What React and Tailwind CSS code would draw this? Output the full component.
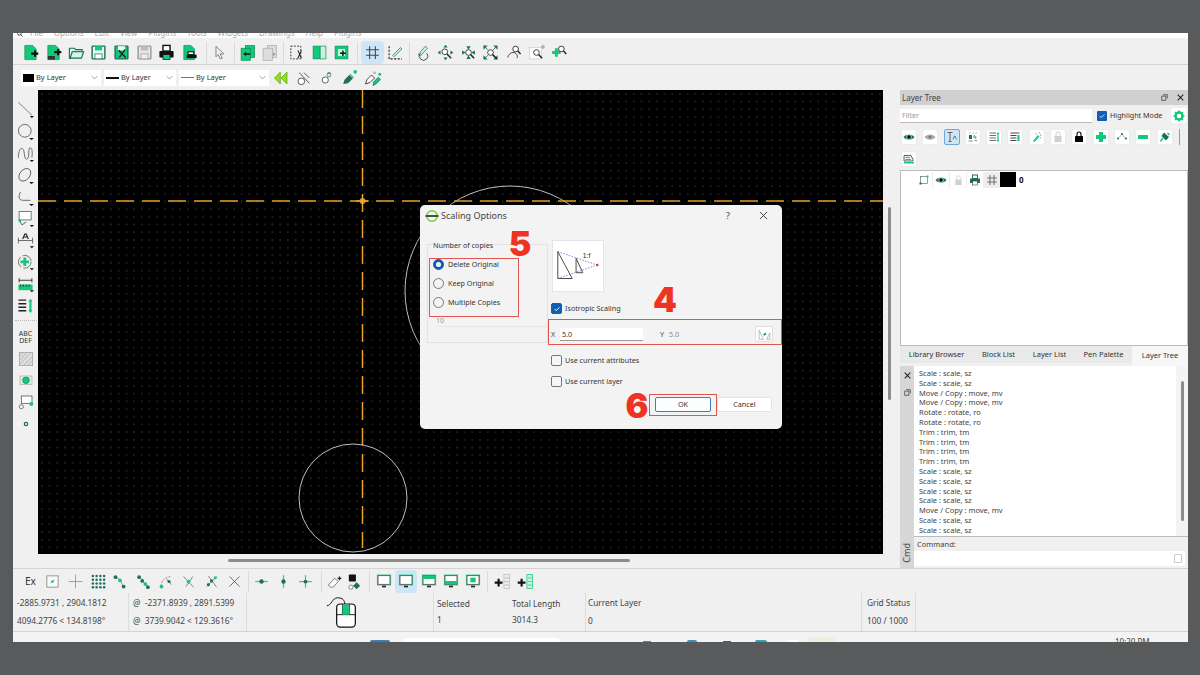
const G = '#12c97b';
const D = '#1f6f5c';

// toolbar glyphs, all on a 24 box
const glyphs = {
  newDoc: <><path d="M4 2h11l5 5v15H4z" fill={G} stroke="#0a8f57" /><path d="M13 12h4v-3h3v3h3v3h-3v3h-3v-3h-4z" fill="#111" /></>,
  newTpl: <><path d="M4 2h11l5 5v15H4z" fill={G} stroke="#0a8f57" /><path d="M4 17h10v5H4z" fill="#333" /><path d="M13 10h4V7h3v3h3v3h-3v3h-3v-3h-4z" fill="#111" /></>,
  open: <><path d="M2 6h7l2 2h9v3H7l-3 9H2z" fill="#d8f5e6" stroke={D} strokeWidth="1.6" /><path d="M6 11h16l-3 9H3z" fill="#d8f5e6" stroke={D} strokeWidth="1.6" /></>,
  save: <><rect x="3" y="3" width="18" height="18" rx="1" fill="#e8f7ef" stroke={D} strokeWidth="2" /><rect x="7" y="3" width="10" height="6" fill={G} /><rect x="7" y="14" width="10" height="7" fill="#fff" stroke={D} /></>,
  saveAs: <><rect x="3" y="3" width="18" height="18" rx="1" fill={G} stroke={D} strokeWidth="2" /><rect x="7" y="3" width="10" height="6" fill="#e8f7ef" /><path d="M8 9l10 10M17 8l-8 11" stroke="#222" strokeWidth="2" /></>,
  saveOff: <><rect x="3" y="3" width="18" height="18" rx="1" fill="#e4e4e4" stroke="#9a9a9a" strokeWidth="2" /><rect x="7" y="3" width="10" height="6" fill="#bbb" /><rect x="7" y="14" width="10" height="7" fill="#eee" stroke="#9a9a9a" /></>,
  print: <><rect x="7" y="2" width="10" height="8" fill="#fff" stroke="#111" strokeWidth="2" /><rect x="2" y="10" width="20" height="9" rx="1" fill="#111" /><rect x="7" y="15" width="10" height="7" fill={G} stroke="#111" /></>,
  printPrev: <><path d="M4 2h10l5 5v15H4z" fill={G} stroke="#0a8f57" /><rect x="10" y="11" width="8" height="4" fill="#fff" stroke="#111" strokeWidth="1.5" /><rect x="8" y="15" width="14" height="5" fill="#111" /></>,
  cursor: <path d="M7 3l11 11h-5l3 6-3 1-3-6-3 3z" fill="#eee" stroke="#777" strokeWidth="1.2" />,
  copy: <><rect x="9" y="2" width="13" height="17" fill={G} stroke="#0a8f57" /><rect x="3" y="6" width="13" height="17" fill={G} stroke="#0a8f57" /><path d="M6 14l4-3v2h6v2h-6v2z" fill="#111" /></>,
  copyOff: <><rect x="9" y="2" width="13" height="17" fill="#ddd" stroke="#aaa" /><rect x="3" y="6" width="13" height="17" fill="#ddd" stroke="#aaa" /><path d="M17 12l4 2-4 3z" fill="#999" /></>,
  cutDash: <><rect x="4" y="3" width="14" height="18" fill="none" stroke="#333" strokeWidth="1.4" strokeDasharray="2.5 2" /><path d="M14 9l5 11M19 9l-5 11" stroke="#222" strokeWidth="1.5" /></>,
  pages: <><rect x="3" y="3" width="10" height="18" fill={G} stroke="#0a8f57" /><path d="M13 3h8v18h-8z" fill="#c9f3de" stroke="#0a8f57" /></>,
  pagePlus: <><rect x="3" y="3" width="18" height="18" fill={G} stroke="#0a8f57" /><rect x="7" y="7" width="10" height="10" fill="#c9f3de" /><path d="M10 12h3V9h2v3h3v2h-3v3h-2v-3h-3z" fill="#111" /></>,
  grid: <path d="M8 3v18M16 3v18M3 8h18M3 16h18" stroke="#444" strokeWidth="1.5" />,
  dashLine: <><path d="M3 3v18h18" fill="none" stroke="#222" strokeWidth="1.6" strokeDasharray="3 2" /><path d="M8 16L19 5l2 2L10 18z" fill="#c9f3de" stroke={D} /></>,
  redraw: <><path d="M6 15L16 3l3 3L9 17z" fill="#c9f3de" stroke={D} /><path d="M9 13a6 6 0 1 0 9 0" fill="none" stroke="#333" strokeWidth="1.2" /></>,
  zoomIn: <><path d="M12 1l3 4H9zM12 23l-3-4h6zM1 12l4-3v6zM23 12l-4 3V9z" fill={D} /><circle cx="11" cy="11" r="4" fill="#fff" stroke="#333" strokeWidth="1.3" /><path d="M14 14l6 6" stroke="#222" strokeWidth="2" /></>,
  zoomOut: <><path d="M12 8L9 3h6zM12 16l3 5H9zM8 12l-5 3V9zM16 12l5-3v6z" fill={D} /><circle cx="12" cy="12" r="4" fill="#fff" stroke="#333" strokeWidth="1.3" /><path d="M15 15l5 5" stroke="#222" strokeWidth="2" /></>,
  zoomFit: <><path d="M2 2h6L2 8zM22 2v6l-6-6zM2 22v-6l6 6zM22 22h-6l6-6z" fill={D} /><path d="M4 4l4 4M20 4l-4 4M4 20l4-4" stroke={D} strokeWidth="1.3" /><circle cx="12" cy="12" r="4" fill="#fff" stroke="#333" strokeWidth="1.3" /><path d="M15 15l6 6" stroke="#222" strokeWidth="2" /></>,
  zoomPrev: <><circle cx="15" cy="7" r="4" fill="#fff" stroke="#333" strokeWidth="1.3" /><path d="M18 10l4 4" stroke="#222" strokeWidth="2" /><path d="M4 19a8 8 0 0 1 9-7 6 6 0 0 1 4 8" fill="none" stroke="#333" strokeWidth="1.2" /></>,
  zoomWin: <><rect x="2" y="5" width="17" height="16" fill="#fff" stroke="#ccc" /><circle cx="12" cy="12" r="4" fill="#fff" stroke="#333" strokeWidth="1.3" /><path d="M15 15l5 5" stroke="#222" strokeWidth="2" /><path d="M21 1v6M18 4h6" stroke="#777" /></>,
  zoomPan: <><path d="M7 6h4v4h4v4h-4v4H7v-4H3v-4h4z" fill={G} /><circle cx="16" cy="7" r="4" fill="#fff" stroke="#333" strokeWidth="1.3" /><path d="M19 10l4 4" stroke="#222" strokeWidth="2" /></>,
  backAll: <><path d="M11 3v18L2 12z" fill="#8fe01a" stroke="#5aa50c" /><path d="M21 3v18l-9-9z" fill="#8fe01a" stroke="#5aa50c" /></>,
  sel1: <><circle cx="8" cy="17" r="5" fill="#fff" stroke="#444" strokeWidth="1.3" /><path d="M5 4l15 16M12 4l8 8" stroke="#444" strokeWidth="1.3" /></>,
  sel2: <><circle cx="10" cy="16" r="5" fill="#fff" stroke="#444" strokeWidth="1.3" /><circle cx="16" cy="8" r="3" fill="#d8f5e6" stroke={D} /><path d="M16 3v2M13 5h6" stroke="#444" /></>,
  pen: <><path d="M3 21l2-6 8-8 5 5-8 8z" fill={D} /><path d="M12 8l5 5" stroke="#fff" /><circle cx="20" cy="4" r="2.6" fill={G} /></>,
  penPair: <><path d="M2 20l2-6 6-6 4 4-6 6z" fill="#fff" stroke="#444" strokeWidth="1.3" /><path d="M12 22l1-5 6-6 3 3-6 6z" fill={G} stroke={D} /><circle cx="14" cy="5" r="2" fill="#bbb" /><circle cx="21" cy="7" r="2" fill={G} /></>,
  line: <><path d="M2 2l19 18" stroke="#555" strokeWidth="1" /><path d="M18 21h6l-3 3z" fill="#111" /></>,
  circle: <><circle cx="11" cy="11" r="9" fill="none" stroke="#555" strokeWidth="1.2" /><path d="M17 21h7l-3.5 3z" fill="#111" /></>,
  spline: <><path d="M2 18C2 2 9 2 10 10s2 12 5 9 0-16 4-15 2 14 2 14" fill="none" stroke="#555" strokeWidth="1.2" /><path d="M18 21h6l-3 3z" fill="#111" /></>,
  ellipse: <><ellipse cx="11" cy="11" rx="7" ry="10" transform="rotate(40 11 11)" fill="none" stroke="#555" strokeWidth="1.2" /><path d="M17 21h7l-3.5 3z" fill="#111" /></>,
  curve: <><path d="M5 4C1 12 3 16 9 16h10" fill="none" stroke="#555" strokeWidth="1.2" /><path d="M17 21h7l-3.5 3z" fill="#111" /></>,
  polyline: <><rect x="3" y="2" width="17" height="12" fill="#fff" stroke="#666" strokeWidth="1.2" /><path d="M3 14l4 7 6-4" fill="none" stroke={D} strokeWidth="1.3" /><circle cx="4" cy="15" r="2" fill={G} /><path d="M18 21h6l-3 3z" fill="#111" /></>,
  dim: <><path d="M2 8v8M22 8v8M2 12h20" stroke="#555" strokeWidth="1.2" /><path d="M8 10l3-7h2l3 7M9 7h6" fill="none" stroke="#222" strokeWidth="1.6" /><path d="M18 20h6l-3 3z" fill="#111" /></>,
  modify: <><circle cx="11" cy="11" r="9" fill="none" stroke="#555" strokeWidth="1.1" strokeDasharray="16 3" /><path d="M9 5h4v4h4v4h-4v4H9v-4H5V9h4z" fill={G} /><path d="M18 20h6l-3 3z" fill="#111" /></>,
  measure: <><path d="M3 3v6M21 3v6M3 6h18" stroke="#333" strokeWidth="1.3" /><rect x="2" y="12" width="20" height="8" fill={G} /><path d="M5 12v3M9 12v3M13 12v3M17 12v3" stroke="#111" /><path d="M18 20h6l-3 3z" fill="#111" /></>,
  order: <><path d="M2 3h11M2 8h11M2 13h11M2 18h11" stroke="#222" strokeWidth="2" /><path d="M19 3v16" stroke={G} strokeWidth="3" /><path d="M19 1l3 4h-6zM19 21l3-4h-6z" fill={G} /></>,
  hatch: <><rect x="2" y="2" width="20" height="20" fill="#ddd" stroke="#999" /><path d="M2 8l6-6M2 14L14 2M2 20L20 2M8 22L22 8M14 22l8-8" stroke="#aaa" /></>,
  camera: <><rect x="3" y="6" width="18" height="13" fill="#e7e7e7" stroke="#aaa" /><circle cx="12" cy="12.5" r="5" fill={G} stroke="#0a8f57" /></>,
  block: <><rect x="5" y="3" width="16" height="11" fill="#fff" stroke="#555" strokeWidth="1.2" /><circle cx="5" cy="19" r="3" fill="#fff" stroke="#555" strokeWidth="1.2" /><circle cx="20" cy="15" r="3" fill={G} /></>,
  point: <circle cx="12" cy="12" r="2.5" fill="#fff" stroke={D} strokeWidth="2" />,
  snapEx: <><rect x="3" y="3" width="18" height="18" fill="#fafafa" stroke="#777" strokeWidth="1.2" /><circle cx="12" cy="12" r="2" fill={G} /><path d="M9 15l6-6" stroke="#777" /></>,
  cross: <path d="M12 1v22M1 12h22" stroke="#777" strokeWidth="1" />,
  dots: <g fill={D}>{[3, 9, 15, 21].flatMap((x) => [3, 9, 15, 21].map((y) => <circle key={`${x}-${y}`} cx={x} cy={y} r="2" />))}</g>,
  snapA: <><path d="M4 4l8 6 4 10" fill="none" stroke="#666" strokeWidth="1.1" /><circle cx="4" cy="5" r="3" fill={D} /><circle cx="11" cy="10" r="3" fill={G} /><circle cx="17" cy="20" r="3" fill={D} /></>,
  snapB: <><path d="M4 3l16 19" stroke="#666" strokeWidth="1.1" /><circle cx="5" cy="5" r="3" fill={D} /><circle cx="10" cy="11" r="3" fill={D} /><circle cx="15" cy="16" r="3" fill={G} /><circle cx="19" cy="21" r="3" fill={D} /></>,
  snapC: <><path d="M3 19C4 10 10 5 20 4" fill="none" stroke="#666" strokeWidth="1.1" strokeDasharray="3 2" /><circle cx="4" cy="20" r="3" fill={G} /><path d="M12 8l8 9" stroke="#444" /><circle cx="16" cy="12" r="2.5" fill={D} /></>,
  snapD: <><path d="M4 4l16 17M19 4L8 20" stroke="#555" strokeWidth="1.1" /><circle cx="12" cy="12" r="3" fill={G} /></>,
  snapE: <><path d="M4 20L21 4M7 3l13 18" stroke="#555" strokeWidth="1.1" /><circle cx="12" cy="11" r="2.5" fill={D} /><circle cx="18" cy="6" r="2.5" fill={G} /><circle cx="7" cy="17" r="2.5" fill={D} /></>,
  snapX: <path d="M4 4l16 16M20 4L4 20" stroke="#444" strokeWidth="1.2" />,
  horiz: <><path d="M2 12h20" stroke="#4bbd8e" strokeWidth="2" /><circle cx="12" cy="12" r="3.5" fill={D} /></>,
  vert: <><path d="M12 2v20" stroke="#4bbd8e" strokeWidth="2" /><circle cx="12" cy="12" r="3.5" fill={D} /></>,
  both: <><path d="M2 12h20M12 2v20" stroke="#4bbd8e" strokeWidth="2" /><circle cx="12" cy="12" r="3" fill={D} /></>,
  eraser: <><path d="M2 18l10-11 6 5-8 9H6z" fill="#fff" stroke="#555" strokeWidth="1.2" /><path d="M17 7h6M20 4v6" stroke="#222" strokeWidth="2" /></>,
  lockSnap: <><rect x="4" y="2" width="10" height="10" rx="1" fill="#111" /><path d="M15 13l5 5-5 5-5-5z" fill={D} /><circle cx="7" cy="20" r="3" fill="#fff" stroke="#555" /></>,
  plusList: <><path d="M1 12h4V8h3v4h4v3H8v4H5v-4H1z" fill="#111" /><rect x="14" y="2" width="8" height="20" fill="#eee" stroke="#bbb" /><path d="M15 7h6M15 12h6M15 17h6" stroke="#aaa" /></>,
  plusCheck: <><path d="M1 12h4V8h3v4h4v3H8v4H5v-4H1z" fill="#111" /><rect x="14" y="2" width="8" height="20" fill="#c9f3de" stroke={G} /><path d="M15 7h6M15 12h6M15 17h6" stroke={G} /></>,
  eye: <><path d="M1 12c5-7 17-7 22 0-5 7-17 7-22 0z" fill={D} /><circle cx="12" cy="12" r="3" fill="#0a0a0a" /><circle cx="12" cy="12" r="5" fill="none" stroke="#fff" strokeWidth="1" /></>,
  eyeOff: <><path d="M1 12c5-7 17-7 22 0-5 7-17 7-22 0z" fill="#aaa" /><circle cx="12" cy="12" r="3" fill="#777" /></>,
  textAuto: <><path d="M3 3h10M8 3v18M5 21h6" stroke="#444" strokeWidth="1.6" /><path d="M14 17l3-7h1l3 7" fill="none" stroke={D} strokeWidth="1.5" /></>,
  tools1: <><path d="M4 4h3M11 4h3M17 4h3" stroke="#777" /><rect x="4" y="8" width="6" height="8" fill={D} /><path d="M12 12h7M15 19h5M3 20h8" stroke="#555" strokeWidth="1.4" /><path d="M14 8l4 8" stroke={G} strokeWidth="2" /></>,
  tools2: <><path d="M3 4h13M3 9h13M3 14h13M3 19h13" stroke="#555" strokeWidth="1.7" /><path d="M20 4v16" stroke={G} strokeWidth="2.5" /><path d="M20 2l3 4h-6zM20 22l3-4h-6z" fill={G} /></>,
  tools3: <><path d="M3 4h18M3 9h12M3 14h12M3 19h12" stroke="#444" strokeWidth="2" /><rect x="17" y="8" width="4" height="12" fill={G} /></>,
  wand: <><path d="M4 20L14 8l3 3L7 22z" fill={G} /><path d="M16 2l2 3M21 8l-3 1M10 4l1 3M20 14l-2-1" stroke="#777" strokeWidth="1.4" /></>,
  lockOff: <><rect x="5" y="10" width="14" height="12" rx="1" fill="#d0d0d0" /><path d="M8 10V6a4 4 0 0 1 8 0v4" fill="none" stroke="#d0d0d0" strokeWidth="2" /></>,
  lockOn: <><rect x="4" y="10" width="16" height="12" rx="1" fill="#000" /><path d="M8 10V6a4 4 0 0 1 8 0v4" fill="none" stroke="#000" strokeWidth="2.2" /></>,
  plus: <path d="M8 2h8v6h6v8h-6v6H8v-6H2V8h6z" fill={G} />,
  wave: <><path d="M3 16l5-5 4-6 4 7 5 4" fill="none" stroke="#888" strokeWidth="1.2" /><circle cx="4" cy="15" r="2" fill={D} /><circle cx="12" cy="6" r="2" fill={D} /><circle cx="20" cy="15" r="2" fill={D} /></>,
  minus: <rect x="2" y="8" width="20" height="8" rx="1" fill={G} />,
  hammer: <><path d="M10 3l10 9-6 7-9-9z" fill={D} /><path d="M8 14l-5 7M17 4l4 4" stroke={G} strokeWidth="3" /></>,
  iron: <><path d="M2 5h14l4 8v3H2z" fill="#e8f7ef" stroke="#222" strokeWidth="1.4" /><path d="M5 9h9M5 13h11" stroke="#222" /><rect x="2" y="18" width="20" height="3" fill={G} /></>,
  rect: <><rect x="5" y="5" width="14" height="14" fill="none" stroke="#666" strokeWidth="1.3" /><rect x="17" y="3" width="4" height="4" fill={G} /><rect x="3" y="17" width="4" height="4" fill={D} /></>,
  printLayer: <><rect x="7" y="2" width="10" height="7" fill="#fff" stroke={D} strokeWidth="2" /><rect x="2" y="9" width="20" height="9" fill={D} /><rect x="7" y="14" width="10" height="8" fill="#fff" stroke="#111" /></>,
  gridThick: <path d="M8 2v20M16 2v20M2 8h20M2 16h20" stroke="#777" strokeWidth="2.4" />,
  gear: <><circle cx="12" cy="12" r="7" fill="#fff" stroke={G} strokeWidth="5" /><path d="M12 1v4M12 19v4M1 12h4M19 12h4M4 4l3 3M17 17l3 3M20 4l-3 3M7 17l-3 3" stroke={G} strokeWidth="3" /></>,
  mirror: <><path d="M2 21V4l8 17z" fill="#fff" stroke="#888" /><path d="M12 12h4l-2-4z" fill={G} /><path d="M22 21V9l-6 12z" fill="#fff" stroke="#888" /><circle cx="12" cy="12" r="2" fill={D} /></>,
};

function Screen({ top = false, bottom = false, center = false }) {
  return (
    <svg viewBox="0 0 24 24" className="w-[16px] h-[16px]">
      <rect x="2" y="3" width="20" height="15" fill="#fff" stroke={G} strokeWidth="1.2" />
      <rect x="3" y="4" width="18" height="13" fill="#fff" stroke="#444" strokeWidth="1.2" />
      {top && <rect x="3" y="4" width="18" height="5" fill={G} />}
      {bottom && <rect x="3" y="12" width="18" height="5" fill={G} />}
      {center && <rect x="8" y="7" width="8" height="7" fill={G} />}
      <rect x="9" y="19" width="6" height="2.5" fill="#222" />
    </svg>
  );
}

function Icon({ name, size = 17, active = false, box = 22.7 }) {
  return (
    <span
      className={`inline-flex items-center justify-center shrink-0 h-[23px] ${active ? 'bg-[#cde6f7] rounded-sm' : ''}`}
      style={{ width: box }}
    >
      <svg viewBox="0 0 24 24" style={{ width: size, height: size }}>{glyphs[name]}</svg>
    </span>
  );
}

function Sep({ className = '' }) {
  return <span className={`w-px h-[21px] bg-[#dadada] shrink-0 ${className}`} />;
}

function LayerIcon({ name, active = false }) {
  return (
    <span className={`w-[16px] h-[16px] flex items-center justify-center rounded-[2px] shrink-0 ${active ? 'bg-[#cfe4f5] border border-[#6fa8d8]' : 'bg-white border border-[#ececec]'}`}>
      <svg viewBox="0 0 24 24" className="w-[12px] h-[12px]">{glyphs[name]}</svg>
    </span>
  );
}

function SelectBox({ width, swatch, label }) {
  return (
    <div className="h-[16px] bg-white flex items-center pl-[2px] pr-[3px] gap-[2px] shrink-0" style={{ width }}>
      {swatch}
      <span className="text-[7.5px] text-[#333] flex-1 whitespace-nowrap">{label}</span>
      <svg viewBox="0 0 10 6" className="w-[7px] h-[5px]"><path d="M1 1l4 4 4-4" fill="none" stroke="#777" /></svg>
    </div>
  );
}

function Radio({ label, checked = false }) {
  return (
    <div className="h-[19px] flex items-center gap-[4px]">
      <span className={`w-[11px] h-[11px] rounded-full border flex items-center justify-center ${checked ? 'bg-[#0f5fb5] border-[#0f5fb5]' : 'bg-[#f3f3f3] border-[#777]'}`}>
        {checked && <span className="w-[5px] h-[5px] rounded-full bg-white" />}
      </span>
      <span className="text-[7.2px] text-[#333]">{label}</span>
    </div>
  );
}

function Check({ label, checked = false }) {
  return (
    <div className="flex items-center gap-[3px]">
      <span className={`w-[11px] h-[11px] rounded-[2px] border flex items-center justify-center ${checked ? 'bg-[#0f5fb5] border-[#0f5fb5]' : 'bg-[#f6f6f6] border-[#777]'}`}>
        {checked && <svg viewBox="0 0 10 10" className="w-[8px] h-[8px]"><path d="M2 5l2 2 4-4" fill="none" stroke="#fff" strokeWidth="1.2" /></svg>}
      </span>
      <span className="text-[7.2px] text-[#333]">{label}</span>
    </div>
  );
}

function ScalingDialog() {
  return (
    <div className="absolute left-[382px] top-[115px] w-[362px] h-[224px] bg-[#f3f3f3] rounded-[5px] shadow-[0_2px_8px_rgba(0,0,0,0.4)] flex flex-col">
      <div className="h-[21px] flex items-center pl-[5px] pr-[14px]">
        <svg viewBox="0 0 24 24" className="w-[14px] h-[14px]">
          <circle cx="12" cy="12" r="9" fill="none" stroke="#7ccf3a" strokeWidth="2.5" />
          <path d="M1 12h22" stroke="#1f3d2c" strokeWidth="3" />
        </svg>
        <span className="text-[9px] text-[#444] ml-[2px] flex-1">Scaling Options</span>
        <span className="text-[9px] text-[#444] mr-[29px]">?</span>
        <svg viewBox="0 0 10 10" className="w-[9px] h-[9px]"><path d="M1 1l8 8M9 1l-8 8" stroke="#333" strokeWidth="1" /></svg>
      </div>
      <div className="flex flex-1 pl-[7px]">
        <div className="w-[121px] h-[99px] mt-[18px] border border-[#e2e2e2] relative pl-[5px] pt-[10px] shrink-0">
          <span className="absolute left-[4px] -top-[5px] text-[7.2px] leading-[10px] text-[#333] bg-[#f3f3f3] px-[1px]">Number of copies</span>
          <Radio label="Delete Original" checked />
          <Radio label="Keep Original" />
          <Radio label="Multiple Copies" />
          <div className="text-[7.2px] text-[#999] ml-[3px] mt-[3px] border-b border-[#e6e6e6]">10</div>
        </div>
        <div className="flex-1 pl-[3px] flex flex-col items-start">
          <div className="w-[52px] h-[52px] bg-white border border-[#e5e5e5] mt-[14px] ml-[1px]">
            <svg viewBox="0 0 52 52" className="w-full h-full">
              <path d="M5 11l15 28H5z" fill="none" stroke="#444" strokeWidth="1" />
              <path d="M24 18l7 15h-7z" fill="none" stroke="#444" strokeWidth="1" />
              <path d="M5 11l41 14M5 39l41-14" stroke="#4444cc" strokeWidth="0.7" strokeDasharray="1.5 1.5" />
              <circle cx="46" cy="25" r="1.3" fill="#d33" />
              <text x="31" y="18" fontSize="7" fill="#222" fontFamily="Liberation Sans">1:f</text>
            </svg>
          </div>
          <div className="mt-[11px]"><Check label="Isotropic Scaling" checked /></div>
          <div className="mt-[10px] h-[20px] w-[222px] flex items-center">
            <span className="text-[7.2px] text-[#444] w-[9px]">X</span>
            <span className="w-[83px] h-[13px] bg-white border-b border-[#999] text-[7.2px] leading-[12px] text-[#333] pl-[2px]">5.0</span>
            <span className="text-[7.2px] text-[#444] ml-[17px] w-[9px]">Y</span>
            <span className="text-[7.2px] text-[#888] flex-1">5.0</span>
            <span className="w-[18px] h-[16px] bg-white border border-[#ddd] rounded-[2px] flex items-center justify-center">
              <svg viewBox="0 0 24 24" className="w-[13px] h-[13px]">{glyphs.mirror}</svg>
            </span>
          </div>
          <div className="mt-[11px]"><Check label="Use current attributes" /></div>
          <div className="mt-[10px]"><Check label="Use current layer" /></div>
          <div className="flex justify-end gap-[6px] w-[221px] mt-[10px]">
            <button className="w-[56px] h-[15px] bg-[#fbfdff] border border-[#3d7fb5] rounded-[2px] text-[7.2px] text-[#333]">OK</button>
            <button className="w-[55px] h-[15px] bg-white border border-[#e3e3e3] rounded-[2px] text-[7.2px] text-[#333]">Cancel</button>
          </div>
        </div>
      </div>
      {/* red marks on top of the dialog */}
      <span className="absolute left-[9px] top-[53px] w-[90px] h-[59px] border border-[#e2554f]" />
      <span className="absolute left-[128px] top-[114px] w-[234px] h-[26px] border border-[#e2554f]" />
      <span className="absolute left-[229px] top-[189px] w-[68px] h-[22px] border border-[#e2554f]" />
      <span className="absolute left-[85px] top-[21px] w-[30px] h-[34px] flex items-center justify-center text-[34px] font-black font-['Inter','Liberation_Sans',sans-serif] text-[#ee3324]">5</span>
      <span className="absolute left-[230px] top-[77px] w-[30px] h-[34px] flex items-center justify-center text-[34px] font-black font-['Inter','Liberation_Sans',sans-serif] text-[#ee3324]">4</span>
      <span className="absolute left-[202px] top-[183px] w-[30px] h-[34px] flex items-center justify-center text-[34px] font-black font-['Inter','Liberation_Sans',sans-serif] text-[#ee3324]">6</span>
    </div>
  );
}

function Canvas() {
  return (
    <div className="relative flex-1 min-h-0 bg-black bg-[radial-gradient(#757575_0.45px,transparent_0.75px)] bg-[length:7.7px_7.7px]">
      <svg className="absolute inset-0 w-full h-full" viewBox="0 0 845 464">
        <circle cx="315" cy="408" r="54" fill="none" stroke="#d4d4d4" strokeWidth="0.9" />
        <circle cx="472" cy="201" r="105" fill="none" stroke="#d4d4d4" strokeWidth="0.9" />
        <path d="M324.5 0v458M0 111h845" stroke="#e8a02a" strokeWidth="1.5" strokeDasharray="18 8" />
        <circle cx="324.5" cy="111" r="3" fill="#e8892a" />
        <path d="M324.5 105v12M318 111h13" stroke="#f0b040" strokeWidth="1" />
      </svg>
      <ScalingDialog />
    </div>
  );
}

const leftTools = ['line', 'circle', 'spline', 'ellipse', 'curve', 'polyline', 'dim', 'modify', 'measure', 'order'];
const leftTools2 = ['hatch', 'camera', 'block', 'point'];
const layerTools = ['eye', 'eyeOff', 'textAuto', 'tools1', 'tools2', 'tools3', 'wand', 'lockOff', 'lockOn', 'plus', 'wave', 'minus', 'hammer'];
const snapTools = ['snapEx', 'cross', 'dots', 'snapA', 'snapB', 'snapC', 'snapD', 'snapE', 'snapX'];
const menuItems = ['File', 'Options', 'Edit', 'View', 'Plugins', 'Tools', 'Widgets', 'Drawings', 'Help', 'Plugins'];

const commandLines = [
  'Scale : scale, sz', 'Scale : scale, sz', 'Move / Copy : move, mv', 'Move / Copy : move, mv',
  'Rotate : rotate, ro', 'Rotate : rotate, ro', 'Trim : trim, tm', 'Trim : trim, tm', 'Trim : trim, tm', 'Trim : trim, tm',
  'Scale : scale, sz', 'Scale : scale, sz', 'Scale : scale, sz', 'Scale : scale, sz',
  'Move / Copy : move, mv', 'Scale : scale, sz', 'Scale : scale, sz',
];

function RightPanel() {
  return (
    <div className="w-[293px] shrink-0 flex flex-col pl-[5px]">
      <div className="h-[15px] bg-[#d0d0d0] flex items-center pl-[2px] pr-[4px] text-[8px] text-[#444]">
        <span className="flex-1">Layer Tree</span>
        <svg viewBox="0 0 10 10" className="w-[7px] h-[7px] mr-[9px]"><path d="M3 1h6v5M1 3h6v6H1z" fill="none" stroke="#333" /></svg>
        <svg viewBox="0 0 10 10" className="w-[7px] h-[7px]"><path d="M1 1l8 8M9 1l-8 8" stroke="#222" strokeWidth="1.5" /></svg>
      </div>
      <div className="h-[21px] flex items-center">
        <span className="w-[192px] h-[14px] bg-white border-b border-[#bbb] text-[7.2px] leading-[13px] text-[#999] pl-[2px]">Filter</span>
        <span className="ml-[5px] w-[10px] h-[10px] bg-[#0f5fb5] rounded-[1px] flex items-center justify-center">
          <svg viewBox="0 0 10 10" className="w-[8px] h-[8px]"><path d="M2 5l2 2 4-4" fill="none" stroke="#fff" /></svg>
        </span>
        <span className="ml-[3px] text-[7.2px] text-[#333] flex-1 whitespace-nowrap">Highlight Mode</span>
        <span className="w-[15px] h-[15px] bg-white rounded-[2px] flex items-center justify-center mr-[2px]">
          <svg viewBox="0 0 24 24" className="w-[12px] h-[12px]">{glyphs.gear}</svg>
        </span>
      </div>
      <div className="h-[22px] flex items-center gap-[5.3px] pl-[1px]">
        {layerTools.map((n) => <LayerIcon key={n} name={n} active={n === 'textAuto'} />)}
        <span className="w-px h-[16px] bg-[#999] ml-[1px]" />
      </div>
      <div className="h-[22px] flex items-center pl-[1px]"><LayerIcon name="iron" /></div>
      <div className="h-[176px] bg-white border border-[#bbb] flex items-start pl-[15px] pt-[1px]">
        <span className="w-[16px] h-[16px] flex items-center justify-center"><svg viewBox="0 0 24 24" className="w-[12px] h-[12px]">{glyphs.rect}</svg></span>
        <span className="w-[17px] h-[16px] flex items-center justify-center border-l border-[#eee]"><svg viewBox="0 0 24 24" className="w-[12px] h-[12px]">{glyphs.eye}</svg></span>
        <span className="w-[17px] h-[16px] flex items-center justify-center border-l border-[#eee]"><svg viewBox="0 0 24 24" className="w-[11px] h-[11px]">{glyphs.lockOff}</svg></span>
        <span className="w-[17px] h-[16px] flex items-center justify-center border-l border-[#eee]"><svg viewBox="0 0 24 24" className="w-[12px] h-[12px]">{glyphs.printLayer}</svg></span>
        <span className="w-[17px] h-[16px] flex items-center justify-center bg-[#eee]"><svg viewBox="0 0 24 24" className="w-[12px] h-[12px]">{glyphs.gridThick}</svg></span>
        <span className="w-[16px] h-[15px] bg-black" />
        <span className="text-[8px] font-bold text-[#111] ml-[3px] leading-[15px]">0</span>
      </div>
      <div className="h-[20px] shrink-0 flex items-start text-[7.5px] text-[#333]">
        <span className="w-[73px] h-[17px] flex items-center justify-center bg-[#e9e9e9]">Library Browser</span>
        <span className="w-[51px] h-[17px] flex items-center justify-center bg-[#e9e9e9]">Block List</span>
        <span className="w-[51px] h-[17px] flex items-center justify-center bg-[#e9e9e9]">Layer List</span>
        <span className="w-[57px] h-[17px] flex items-center justify-center bg-[#e9e9e9]">Pen Palette</span>
        <span className="flex-1 h-[20px] flex items-center justify-center bg-[#f7f7f7]">Layer Tree</span>
      </div>
      <div className="flex-1 min-h-0 flex">
        <div className="w-[14px] bg-[#d6d6d6] flex flex-col items-center pt-[6px] shrink-0">
          <svg viewBox="0 0 10 10" className="w-[7px] h-[7px]"><path d="M1 1l8 8M9 1l-8 8" stroke="#222" strokeWidth="1.5" /></svg>
          <svg viewBox="0 0 10 10" className="w-[7px] h-[7px] mt-[10px]"><path d="M3 1h6v5M1 3h6v6H1z" fill="none" stroke="#333" /></svg>
          <span className="mt-auto mb-[5px] text-[9px] leading-[10px] text-[#444] [writing-mode:vertical-rl] rotate-180">Cmd</span>
        </div>
        <div className="flex-1 flex flex-col min-w-0">
          <div className="h-[171px] shrink-0 bg-white flex border-b border-[#bbb] pl-[5px] pt-[3px]">
            <div className="flex-1 text-[7.5px] leading-[9.8px] text-[#444]">
              {commandLines.map((line, i) => <div key={i} className="whitespace-nowrap">{line}</div>)}
            </div>
            <div className="w-[12px] bg-[#f4f4f4] flex justify-center py-[15px] -mt-[3px]">
              <span className="w-[3px] h-full bg-[#8c8c8c] rounded-full" />
            </div>
          </div>
          <div className="text-[7.5px] leading-[12px] text-[#444] pl-[3px] pt-[1px]">Command:</div>
          <div className="h-[15px] mt-[1px] bg-white flex items-center justify-end mr-[3px] pr-[3px]">
            <span className="w-[8px] h-[9px] border border-[#ccc] rounded-[1px]" />
          </div>
        </div>
      </div>
    </div>
  );
}

export default function App() {
  return (
    <div className="w-[1200px] h-[675px] bg-[#595a5c] pt-[33px] pb-[33px] pl-[13px] pr-[12px] font-['Noto_Sans','Liberation_Sans',sans-serif]">
      <div className="h-full bg-[#f0f0f0] flex flex-col overflow-hidden">
        {/* menu bar, cut off by the window edge */}
        <div className="h-[5px] bg-white shrink-0 overflow-hidden flex items-start pl-[4px] text-[8px] leading-[8px] text-[#aaa] whitespace-nowrap">
          <svg viewBox="0 0 10 10" className="w-[6px] h-[6px] -mt-[2px] mr-[7px] shrink-0"><circle cx="4" cy="4" r="3" fill="none" stroke="#333" strokeWidth="1.5" /><path d="M6 6l3 3" stroke="#333" strokeWidth="1.5" /></svg>
          <span className="-mt-[4px] flex gap-[11px]">
            {menuItems.map((m, i) => <span key={i}>{m}</span>)}
          </span>
        </div>

        <div className="h-[27px] shrink-0 flex items-center pl-[6.5px] pt-[2px] border-b border-[#d4d4d4]">
          {['newDoc', 'newTpl', 'open', 'save', 'saveAs', 'saveOff', 'print', 'printPrev'].map((n) => <Icon key={n} name={n} />)}
          <Sep className="ml-[5px] mr-[1.5px]" />
          <Icon name="cursor" />
          <Sep className="ml-[2.5px] mr-[1px]" />
          <Icon name="copy" />
          <Icon name="copyOff" />
          <Sep className="ml-[2px] mr-[1px]" />
          {['cutDash', 'pages', 'pagePlus'].map((n) => <Icon key={n} name={n} />)}
          <Sep className="ml-[4px] mr-[3px]" />
          <Icon name="grid" active />
          <Icon name="dashLine" />
          <Sep className="ml-[2px] mr-[2px]" />
          {['redraw', 'zoomIn', 'zoomOut', 'zoomFit', 'zoomPrev', 'zoomWin', 'zoomPan'].map((n) => <Icon key={n} name={n} />)}
        </div>

        <div className="h-[25px] shrink-0 flex items-center pl-[8px]">
          <div className="flex gap-[3px]">
            <SelectBox width={80} label="By Layer" swatch={<span className="w-[11px] h-[8px] bg-black" />} />
            <SelectBox width={72} label="By Layer" swatch={<span className="w-[13px] h-[2px] bg-[#111]" />} />
            <SelectBox width={90} label="By Layer" swatch={<span className="w-[13px] h-px bg-[#777]" />} />
          </div>
          <span className="flex">
            <Icon name="backAll" size={16} box={23} />
            <Icon name="sel1" size={16} box={23} />
            <Icon name="sel2" size={15} box={23} />
            <Icon name="pen" size={17} box={23} />
            <Icon name="penPair" size={18} box={23} />
          </span>
        </div>

        <div className="flex-1 min-h-0 flex">
          <div className="w-[25px] shrink-0 flex flex-col items-center pt-[9px]">
            {leftTools.map((n) => (
              <div key={n} className="h-[21.8px] flex items-center"><Icon name={n} size={17} box={25} /></div>
            ))}
            <span className="w-[22px] border-t border-dotted border-[#bbb] mt-[3px]" />
            <div className="h-[21.8px] mt-[5px] flex flex-col items-center justify-center text-[7px] leading-[7px] text-[#333]">
              <span>ABC</span>
              <span>DEF</span>
            </div>
            {leftTools2.map((n) => (
              <div key={n} className="h-[21.8px] flex items-center"><Icon name={n} size={16} box={25} /></div>
            ))}
          </div>

          <div className="flex-1 min-w-0 flex flex-col">
            <div className="flex-1 min-h-0 flex">
              <Canvas />
              <div className="w-[12px] shrink-0 bg-[#f0f0f0] flex flex-col items-center pt-[117px]">
                <span className="w-[3px] h-[193px] bg-[#8c8c8c] rounded-full" />
              </div>
            </div>
            <div className="h-[14px] shrink-0 pl-[190px] pt-[5px] pr-[12px]">
              <div className="w-[402px] h-[3px] bg-[#8c8c8c] rounded-full" />
            </div>
          </div>

          <RightPanel />
        </div>

        {/* snap toolbar */}
        <div className="h-[25px] shrink-0 flex items-center pl-[12px] border-t border-[#d4d4d4]">
          <span className="text-[10px] text-[#333] w-[16.5px] shrink-0">Ex</span>
          {snapTools.map((n) => <Icon key={n} name={n} size={15} />)}
          <Sep className="ml-[2px] mr-[2px]" />
          {['horiz', 'vert', 'both'].map((n) => <Icon key={n} name={n} size={15} box={22} />)}
          <Sep className="ml-[4px] mr-[3px]" />
          <Icon name="eraser" size={15} box={20} />
          <Icon name="lockSnap" size={17} box={20} />
          <Sep className="ml-[4px] mr-[3px]" />
          <span className="w-[22.4px] h-[23px] flex items-center justify-center"><Screen /></span>
          <span className="w-[22.4px] h-[23px] flex items-center justify-center bg-[#cde6f7] rounded-sm"><Screen /></span>
          <span className="w-[22.4px] h-[23px] flex items-center justify-center"><Screen top /></span>
          <span className="w-[22.4px] h-[23px] flex items-center justify-center"><Screen bottom /></span>
          <span className="w-[22.4px] h-[23px] flex items-center justify-center"><Screen center /></span>
          <Sep className="ml-[2px] mr-[4px]" />
          <Icon name="plusList" size={17} />
          <Icon name="plusCheck" size={17} />
        </div>

        {/* status bar */}
        <div className="h-[39px] shrink-0 flex border-b border-[#d4d4d4] text-[8.3px] text-[#444]">
          <div className="w-[116px] border-r border-[#dcdcdc] flex flex-col justify-center gap-[8px] pl-[4px] leading-[10px] whitespace-nowrap">
            <span>-2885.9731 , 2904.1812</span>
            <span>4094.2776 &lt; 134.8198°</span>
          </div>
          <div className="w-[118px] border-r border-[#dcdcdc] flex flex-col justify-center gap-[8px] pl-[4px] leading-[10px] whitespace-nowrap">
            <span>@&nbsp; -2371.8939 , 2891.5399</span>
            <span>@&nbsp; 3739.9042 &lt; 129.3616°</span>
          </div>
          <div className="w-[187px] border-r border-[#dcdcdc] flex items-center justify-center pl-[4px]">
            <svg viewBox="0 0 36 36" className="w-[32px] h-[34px]">
              <path d="M1 11c5 0 6-9 12-9s8 3 8 7" fill="none" stroke="#111" strokeWidth="1.1" />
              <rect x="12" y="9" width="21" height="26" rx="4" fill="#fff" stroke="#111" strokeWidth="1.4" />
              <path d="M12 21h21M18.5 9v12M26.5 9v12" stroke="#111" strokeWidth="1" />
              <rect x="18.5" y="10" width="8" height="11" fill={G} />
            </svg>
          </div>
          <div className="w-[78px] flex flex-col justify-center gap-[6px] pl-[3px] leading-[10px]">
            <span>Selected</span><span>1</span>
          </div>
          <div className="w-[74px] border-r border-[#dcdcdc] flex flex-col justify-center gap-[6px] leading-[10px]">
            <span>Total Length</span><span>3014.3</span>
          </div>
          <div className="w-[276px] border-r border-[#dcdcdc] flex flex-col justify-center gap-[8px] pl-[2px] leading-[10px]">
            <span>Current Layer</span><span>0</span>
          </div>
          <div className="w-[54px] border-r border-[#dcdcdc] flex flex-col justify-center gap-[8px] pl-[5px] leading-[10px] whitespace-nowrap">
            <span>Grid Status</span><span>100 / 1000</span>
          </div>
        </div>

        {/* top of the system taskbar, cut off at the bottom */}
        <div className="h-[10px] shrink-0 bg-[#f3f3f3] overflow-hidden flex items-end pl-[357px]">
          <span className="w-[20px] h-[2px] bg-[#3f7fb5] rounded-t-sm" />
          <span className="ml-[13px] w-[157px] h-[4px] bg-white rounded-t-sm" />
          <span className="ml-[83px] w-[8px] h-[1px] bg-[#7a8a3a]" />
          <span className="ml-[36px] w-[10px] h-[2px] bg-[#3f8fc5] rounded-t-full" />
          <span className="ml-[26px] w-[8px] h-[1px] bg-[#555]" />
          <span className="ml-[24px] w-[12px] h-[2px] bg-[#2fa5b5] rounded-t-full" />
          <span className="ml-[21px] w-[10px] h-[2px] bg-white" />
          <span className="ml-[9px] w-[28px] h-[5px] bg-[#e8f3dc] rounded-t-sm" />
          <span className="ml-[280px] text-[8px] leading-[8px] text-[#444] -mb-[4px] whitespace-nowrap">10:20 PM</span>
        </div>
      </div>
    </div>
  );
}
